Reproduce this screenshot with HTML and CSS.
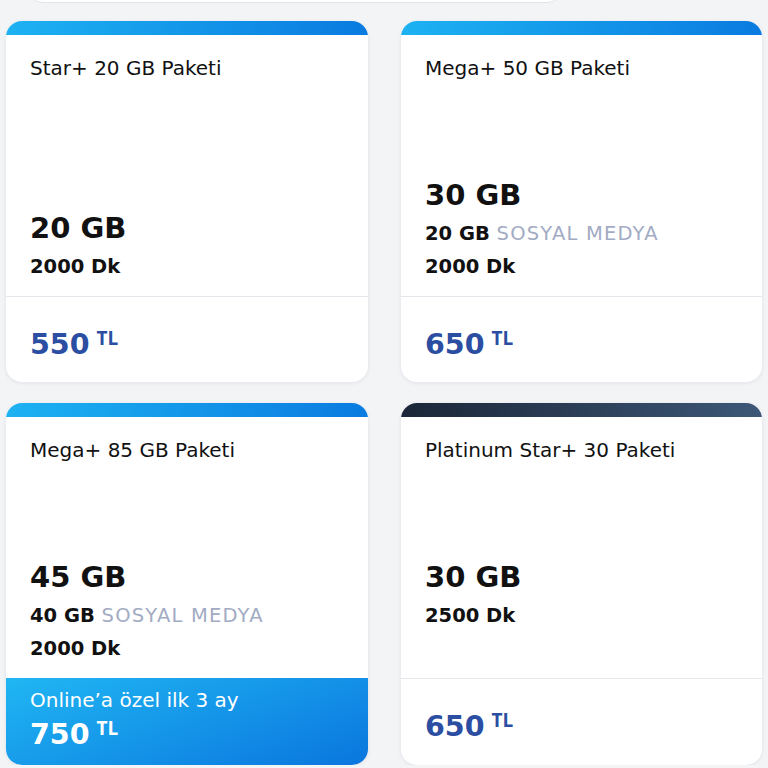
FILE: index.html
```html
<!DOCTYPE html>
<html lang="tr">
<head>
    <meta charset="UTF-8">
    <meta name="viewport" content="width=device-width, initial-scale=1.0">
    <title>Paketler</title>
    <link rel="stylesheet" href="styles.css">
</head>
<body>
    <div class="search-pill"></div>

    <div class="package-grid">
        <div class="card">
            <div class="card-bar"></div>
            <div class="card-body">
                <div class="card-title">Star+ 20 GB Paketi</div>
                <div class="card-info">
                    <div class="info-main">20 GB</div>
                    <div class="info-line">2000 Dk</div>
                </div>
            </div>
            <div class="card-price">
                <span class="price-amount">550</span><span class="price-currency">TL</span>
            </div>
        </div>

        <div class="card">
            <div class="card-bar"></div>
            <div class="card-body">
                <div class="card-title">Mega+ 50 GB Paketi</div>
                <div class="card-info">
                    <div class="info-main">30 GB</div>
                    <div class="info-line">20 GB <span class="info-social">SOSYAL MEDYA</span></div>
                    <div class="info-line">2000 Dk</div>
                </div>
            </div>
            <div class="card-price">
                <span class="price-amount">650</span><span class="price-currency">TL</span>
            </div>
        </div>

        <div class="card">
            <div class="card-bar"></div>
            <div class="card-body">
                <div class="card-title">Mega+ 85 GB Paketi</div>
                <div class="card-info">
                    <div class="info-main">45 GB</div>
                    <div class="info-line">40 GB <span class="info-social">SOSYAL MEDYA</span></div>
                    <div class="info-line">2000 Dk</div>
                </div>
            </div>
            <div class="card-price card-price-online">
                <div class="online-label">Online’a özel ilk 3 ay</div>
                <div class="online-row">
                    <span class="price-amount">750</span><span class="price-currency">TL</span>
                </div>
            </div>
        </div>

        <div class="card">
            <div class="card-bar card-bar-platinum"></div>
            <div class="card-body">
                <div class="card-title">Platinum Star+ 30 Paketi</div>
                <div class="card-info">
                    <div class="info-main">30 GB</div>
                    <div class="info-line">2500 Dk</div>
                    <div class="info-line"></div>
                </div>
            </div>
            <div class="card-price">
                <span class="price-amount">650</span><span class="price-currency">TL</span>
            </div>
        </div>
    </div>
</body>
</html>
```

FILE: styles.css
```css
body {
    margin: 0;
    padding: 0;
    background-color: #f3f4f6;
    font-family: "DejaVu Sans", "Noto Sans", sans-serif;
    color: #111;
}
.search-pill {
    width: 546px;
    height: 44px;
    margin: -41px 0 0 22px;
    background-color: #fff;
    border: 1px solid #e2e4e8;
    border-radius: 22px;
    box-sizing: border-box;
}
.package-grid {
    display: grid;
    grid-template-columns: 362px 361px;
    column-gap: 33px;
    row-gap: 21px;
    padding: 18px 0 0 6px;
}
.card {
    background-color: #fff;
    border-radius: 16px;
    overflow: hidden;
    box-shadow: 0 1px 4px rgba(20, 30, 50, 0.08);
    display: flex;
    flex-direction: column;
}
.card-bar {
    height: 14px;
    background: linear-gradient(90deg, #1db2f2, #0a7be0);
}
.card-bar-platinum {
    background: linear-gradient(90deg, #1b2638, #3d5878);
}
.card-body {
    height: 261px;
    box-sizing: border-box;
    padding: 21px 24px 13px;
    display: flex;
    flex-direction: column;
}
.card-title {
    font-size: 20px;
    line-height: 24px;
}
.card-info {
    margin-top: auto;
}
.info-main {
    font-size: 29px;
    line-height: 43px;
    padding-top: 2px;
    font-weight: 700;
}
.info-line {
    height: 33px;
    font-size: 19.5px;
    line-height: 34px;
    font-weight: 700;
}
.info-social {
    font-weight: 400;
    color: #a2abc3;
    letter-spacing: 1.2px;
}
.card-price {
    height: 86px;
    box-sizing: border-box;
    border-top: 1px solid #e4e7eb;
    padding: 30px 24px 0;
    display: flex;
    align-items: flex-start;
}
.price-amount {
    font-size: 28.5px;
    line-height: 36px;
    font-weight: 700;
    color: #2b4ea2;
}
.price-currency {
    font-family: "Open Sans", sans-serif;
    font-size: 19px;
    line-height: 22px;
    font-weight: 700;
    color: #2b4ea2;
    margin-left: 7px;
}
.card-price-online {
    height: 87px;
    border-top: none;
    padding-top: 10px;
    display: block;
    background: linear-gradient(160deg, #20b6f3, #0a76de);
    color: #fff;
}
.online-label {
    font-size: 20px;
    line-height: 24px;
}
.online-row {
    display: flex;
    align-items: flex-start;
    margin-top: 5px;
}
.card-price-online .price-amount,
.card-price-online .price-currency {
    color: #fff;
}
```
